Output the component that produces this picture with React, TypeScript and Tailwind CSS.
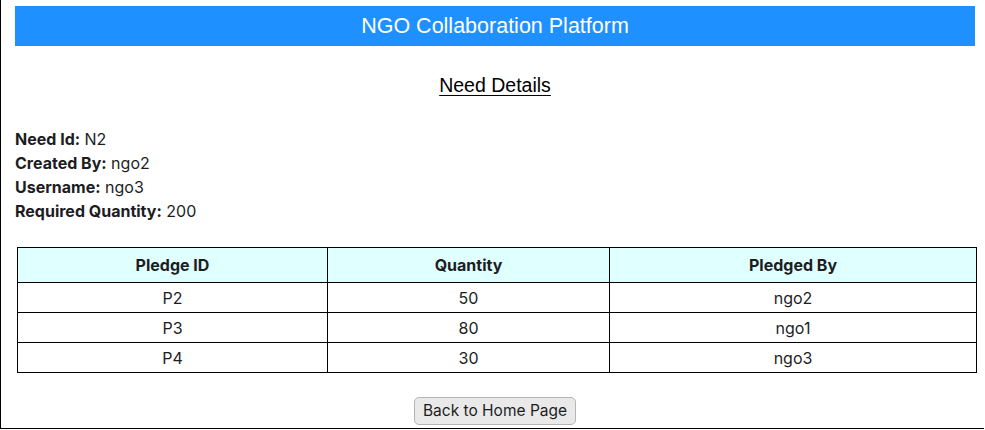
const PLEDGES = [
  { id: 'P2', quantity: 50, by: 'ngo2' },
  { id: 'P3', quantity: 80, by: 'ngo1' },
  { id: 'P4', quantity: 30, by: 'ngo3' },
];

const DETAILS = [
  { label: 'Need Id:', value: 'N2' },
  { label: 'Created By:', value: 'ngo2' },
  { label: 'Username:', value: 'ngo3' },
  { label: 'Required Quantity:', value: '200' },
];

export default function App() {
  return (
    <div className="w-[984px] h-[429px] border-l border-b border-black bg-white text-[#1d1d1f] font-['Inter',sans-serif] overflow-hidden">
      <div className="pl-[14px] pr-[9px] pt-[6px]">
        {/* Header */}
        <header className="h-[40px] w-[960px] bg-[#1e90ff] flex items-center justify-center">
          <h1 className="text-white text-[21.5px] font-['Liberation_Sans',Arial,sans-serif]">
            NGO Collaboration Platform
          </h1>
        </header>

        <h2 className="mt-[27px] text-center text-[19.5px] leading-[24px] underline underline-offset-[3px] text-black font-['Liberation_Sans',Arial,sans-serif]">
          Need Details
        </h2>

        {/* Details */}
        <div className="mt-[30px] text-[16px] leading-[24px]">
          {DETAILS.map((d) => (
            <div key={d.label}>
              <span className="font-bold">{d.label}</span> {d.value}
            </div>
          ))}
        </div>

        {/* Pledges */}
        <table className="mt-[24px] ml-[2px] w-[960px] table-fixed border-collapse text-[16px]">
          <colgroup>
            <col className="w-[310px]" />
            <col className="w-[282px]" />
            <col />
          </colgroup>
          <thead>
            <tr className="bg-[#e0ffff] h-[35px]">
              <th className="border border-black font-bold">Pledge ID</th>
              <th className="border border-black font-bold">Quantity</th>
              <th className="border border-black font-bold">Pledged By</th>
            </tr>
          </thead>
          <tbody>
            {PLEDGES.map((p) => (
              <tr key={p.id} className="h-[30px] text-center">
                <td className="border border-black">{p.id}</td>
                <td className="border border-black">{p.quantity}</td>
                <td className="border border-black">{p.by}</td>
              </tr>
            ))}
          </tbody>
        </table>

        <div className="mt-[24px] flex justify-center">
          <button className="h-[28px] px-[8px] text-[15.5px] bg-[#e9e9e9] border border-[#b5b5b5] rounded-[5px] text-[#1d1d1f]">
            Back to Home Page
          </button>
        </div>
      </div>
    </div>
  );
}
